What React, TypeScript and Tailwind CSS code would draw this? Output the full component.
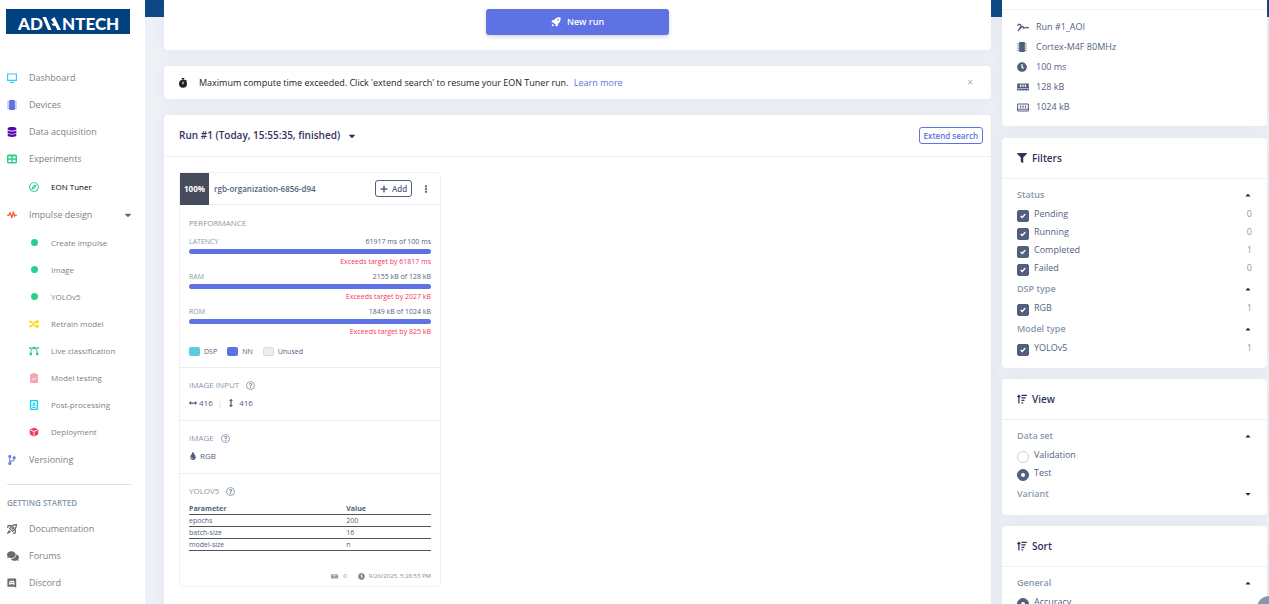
import type { ReactNode } from "react";
import {
  FaArrowsAltH,
  FaArrowsAltV,
  FaCaretDown,
  FaCaretUp,
  FaClock,
  FaCodeBranch,
  FaComments,
  FaDatabase,
  FaEllipsisV,
  FaFilter,
  FaMemory,
  FaPlus,
  FaRandom,
  FaRegCompass,
  FaRegQuestionCircle,
  FaSortAmountUp,
  FaTint,
} from "react-icons/fa";

function MonitorIcon() {
  return (
    <svg viewBox="0 0 10 10" className="size-[10px]" fill="none" stroke="currentColor" strokeWidth="1.2">
      <path d="M.6 1h8.8v6.400H.6zM2.800 9.300h4.400" />
    </svg>
  );
}

function ChipIcon() {
  return (
    <svg viewBox="0 0 10 10" className="size-[10px]" fill="currentColor">
      <rect x="2.200" y="0" width="5.600" height="10" rx=".6" />
      <path d="M.2 1.200h9.600v1.200H.2zM.2 3.400h9.600v1.200H.2zM.2 5.600h9.600v1.200H.2zM.2 7.800h9.600V9H.2z" opacity=".65" />
    </svg>
  );
}

function GridIcon() {
  return (
    <svg viewBox="0 0 10 10" className="size-[10px]" fill="none" stroke="currentColor" strokeWidth="1.4">
      <rect x=".7" y="1.200" width="8.600" height="7.600" rx=".8" />
      <path d="M.7 5h8.600M5 1v8M.7 1.700h8.600" />
    </svg>
  );
}

function PulseIcon() {
  return (
    <svg
      viewBox="0 0 10 10"
      className="size-[10px]"
      fill="none"
      stroke="currentColor"
      strokeWidth="1.4"
      strokeLinejoin="round"
      strokeLinecap="round"
    >
      <path d="M.7 5.300h1.200L3.200 2.600l1.600 5 1.500-5.600 1.300 4.200.7-1h1" />
    </svg>
  );
}

function CurveIcon() {
  return (
    <svg viewBox="0 0 10 10" className="size-[10px]" fill="none" stroke="currentColor">
      <path d="M1 2h8M3.800 2.200C2.400 3 1.800 4.600 1.800 7M6.200 2.200C7.600 3 8.200 4.600 8.200 7" />
      <path d="M3.800.8h2.400v2.400H3.800zM.6 6.800h2.400v2.400H.6zM7 6.800h2.400v2.400H7z" fill="currentColor" stroke="none" />
      <circle cx=".9" cy="2" r=".9" fill="currentColor" stroke="none" />
      <circle cx="9.100" cy="2" r=".9" fill="currentColor" stroke="none" />
    </svg>
  );
}

function ClipboardIcon() {
  return (
    <svg viewBox="0 0 10 10" className="size-[10px]">
      <path d="M1.800 1h1.700a1.500 1.500 0 0 1 3 0h1.700a.7.7 0 0 1 .7.7v7.600a.7.7 0 0 1-.7.7H1.800a.7.7 0 0 1-.7-.7V1.700a.7.7 0 0 1 .7-.7z" fill="currentColor" />
      <path d="M3.200 5.600l1.300 1.300 2.400-2.500" fill="none" stroke="#fff" />
    </svg>
  );
}

function BadgeIcon() {
  return (
    <svg viewBox="0 0 10 10" className="size-[10px]" fill="none" stroke="currentColor">
      <rect x="1.600" y=".6" width="6.800" height="8.800" rx=".6" strokeWidth="1.300" />
      <circle cx="5" cy="3.500" r="1.100" fill="currentColor" stroke="none" />
      <path d="M3.200 5.200h3.600M3.200 7.400h3.600" />
    </svg>
  );
}

function BoxIcon() {
  return (
    <svg viewBox="0 0 10 10" className="size-[10px]">
      <path d="M5 .8l3.600 1.400.6 1v3.700L8.400 8 5 9.500 1.600 8 .8 6.900V3.200l.6-1z" fill="currentColor" />
      <path d="M1.600 3.200L5 4.400l3.400-1.200M5 4.400v4.800" fill="none" stroke="#fff" strokeWidth=".9" />
    </svg>
  );
}

function SpaceshipIcon() {
  return (
    <svg viewBox="0 0 10 10" className="size-[10px]" fill="none" stroke="currentColor" strokeWidth="1.200">
      <path d="M9.400.6C6.500.6 4.200 1.700 2.700 4.500l2.800 2.800C8.300 5.800 9.400 3.500 9.400.6z" />
      <path d="M4.400 1.600H1.200L.6 4.200M8.400 5.600v3.200l-2.600.6M2.400 6.400.8 9.200l2.800-1.600" />
      <circle cx="6" cy="4" r=".9" />
    </svg>
  );
}

function DiscordIcon() {
  return (
    <svg viewBox="0 0 10 10" className="size-[10px]">
      <path d="M1 .6h7.600a.6.6 0 0 1 .6.6v8.700L7.600 8.800H1a.6.6 0 0 1-.6-.6v-7A.6.6 0 0 1 1 .6z" fill="currentColor" />
      <path d="M2.600 2.800h4.400l.8 3.800-1.400.2-.6-.6H3.800l-.6.6-1.400-.2z" fill="#fff" />
      <path d="M3.200 4h1v1.100h-1zM5.400 4h1v1.100h-1z" fill="currentColor" />
    </svg>
  );
}

function RocketIcon() {
  return (
    <svg viewBox="0 0 10 10" className="size-[10px]" fill="currentColor">
      <path
        fillRule="evenodd"
        d="M9.600.4C6.800.1 4.900 1 3.600 2.700L1.600 3 .3 5.200l2 .2 2.300 2.300.2 2L7 8.400l.3-2C9 5.100 9.900 3.200 9.600.4zM7 2.200a.8.8 0 1 1 0 1.600.8.8 0 0 1 0-1.600z"
      />
      <path d="M1.400 6.800l1.800 1.800-2.600.8z" />
    </svg>
  );
}

function StopwatchIcon() {
  return (
    <svg viewBox="0 0 10 10" className="size-[10px]" fill="currentColor">
      <path d="M3.600 0h2.800v1.100H5.600v.8h-1.200v-.8h-.8zM7.900 1.500l.9.900-.9.9-.9-.9z" />
      <circle cx="5" cy="5.800" r="4" />
      <path d="M5 3.600v2.600" stroke="#fff" />
    </svg>
  );
}

function ScribbleIcon() {
  return (
    <svg viewBox="0 0 12 9" className="h-[9px] w-3" fill="none" stroke="currentColor" strokeWidth="1.300" strokeLinecap="round" strokeLinejoin="round">
      <path d="M.8 2.200C2 1 4 .8 4 2.600 4 4.200 2.400 6 1.400 7.600 2.800 6 4.600 3.600 5.800 3.400c.9 0 .2 1.900 1 2 .8 0 1-1.200 1.800-1 .6.200.3.5 2.800.3" />
    </svg>
  );
}

function MemoryOutlineIcon() {
  return (
    <svg viewBox="0 0 12 9" className="h-[9px] w-3" fill="none" stroke="currentColor">
      <path d="M.6 1h10.800v7H.6zM.6 6.200h10.800" />
      <path d="M3.500 2.400v2.400M6 2.400v2.400M8.500 2.400v2.400" strokeWidth="1.200" />
    </svg>
  );
}

const dot = <span className="ml-[2px] block size-[7px] rounded-full bg-[#2dce89]" />;

type NavItem = { label: string; icon: ReactNode; color?: string; active?: boolean; caret?: boolean; children?: NavItem[] };

const navItems: NavItem[] = [
  { label: "Dashboard", icon: <MonitorIcon />, color: "text-[#35cdf0]" },
  { label: "Devices", icon: <ChipIcon />, color: "text-[#5e72e4]" },
  { label: "Data acquisition", icon: <FaDatabase />, color: "text-[#5603ad]" },
  {
    label: "Experiments",
    icon: <GridIcon />,
    color: "text-[#2dce89]",
    children: [{ label: "EON Tuner", icon: <FaRegCompass />, color: "text-[#2dce89]", active: true }],
  },
  {
    label: "Impulse design",
    icon: <PulseIcon />,
    color: "text-[#fb6340]",
    caret: true,
    children: [
      { label: "Create impulse", icon: dot },
      { label: "Image", icon: dot },
      { label: "YOLOv5", icon: dot },
      { label: "Retrain model", icon: <FaRandom />, color: "text-[#ffd600]" },
      { label: "Live classification", icon: <CurveIcon />, color: "text-[#2dce89]" },
      { label: "Model testing", icon: <ClipboardIcon />, color: "text-[#f3a4b5]" },
      { label: "Post-processing", icon: <BadgeIcon />, color: "text-[#11cdef]" },
      { label: "Deployment", icon: <BoxIcon />, color: "text-[#f5365c]" },
    ],
  },
  { label: "Versioning", icon: <FaCodeBranch />, color: "text-[#5e72e4]" },
];

const helpItems: NavItem[] = [
  { label: "Documentation", icon: <SpaceshipIcon />, color: "text-[#6b6b6b]" },
  { label: "Forums", icon: <FaComments className="text-xs" />, color: "text-[#6b6b6b]" },
  { label: "Discord", icon: <DiscordIcon />, color: "text-[#6b6b6b]" },
];

function NavRow({ item, sub }: { item: NavItem; sub?: boolean }) {
  return (
    <li>
      <a
        href="#"
        className={`flex h-[27px] items-center ${sub ? "pl-[29px] text-[8px]" : "pl-[7px] text-[9px]"} ${item.active ? "text-black" : "text-[#7f7f7f]"}`}
      >
        <span className={`w-[22px] shrink-0 text-[10px] ${item.color ?? ""}`}>{item.icon}</span>
        {item.label}
        {item.caret && <FaCaretDown className="mr-3 ml-auto text-[10px] text-[#666]" />}
      </a>
      {item.children && (
        <ul className="py-px">
          {item.children.map((child) => (
            <NavRow key={child.label} item={child} sub />
          ))}
        </ul>
      )}
    </li>
  );
}

function Sidebar() {
  return (
    <aside className="w-[145px] shrink-0 bg-white">
      <svg viewBox="0 0 124 25" className="mt-[9px] ml-[6px] h-[25px] w-[124px] bg-[#004280]" role="img" aria-label="Advantech">
        <g fill="#fff" fontFamily="Lato, sans-serif" fontWeight="900" fontSize="17">
          <text x="12" y="21">AD</text>
          <text x="56" y="21">NTECH</text>
        </g>
        <path d="M36.500 8h3.500l5.500 13h-3.500zM45 10.500l3.500-2.500 6.500 13h-3.700l-2-4.200h-2.600l-1.200-2.300h2.700z" fill="#fff" />
      </svg>
      <ul className="mt-[30px]">
        {navItems.map((item) => (
          <NavRow key={item.label} item={item} />
        ))}
      </ul>
      <hr className="mt-[11px] ml-[7px] w-[124px] border-[#dfe1e5]" />
      <h6 className="mt-3 ml-[7px] text-[8px] leading-3 font-semibold text-[#8898aa]">GETTING STARTED</h6>
      <ul className="mt-[6px]">
        {helpItems.map((item) => (
          <NavRow key={item.label} item={item} />
        ))}
      </ul>
    </aside>
  );
}

const metrics = [
  { name: "LATENCY", value: "61917 ms of 100 ms", over: "Exceeds target by 61817 ms" },
  { name: "RAM", value: "2155 kB of 128 kB", over: "Exceeds target by 2027 kB" },
  { name: "ROM", value: "1849 kB of 1024 kB", over: "Exceeds target by 825 kB" },
];

const params = [
  ["epochs", "200"],
  ["batch-size", "16"],
  ["model-size", "n"],
];

function SectionTitle({ children }: { children: ReactNode }) {
  return (
    <h5 className="flex items-center gap-[7px] text-[8px] leading-3 text-[#8898aa]">
      {children}
      <FaRegQuestionCircle className="text-[9px]" />
    </h5>
  );
}

function ResultCard() {
  return (
    <article className="w-[262px] rounded border border-[#f0f1f4] text-[#525f7f]">
      <header className="flex h-8 items-center border-b border-[#eceef2]">
        <div className="flex h-8 w-[29px] items-center justify-center bg-[#474c5c] text-[8px] font-bold text-white">100%</div>
        <h4 className="ml-[5px] text-[8px] font-semibold">rgb-organization-6856-d94</h4>
        <button className="ml-auto flex h-[17px] w-[37px] items-center justify-center gap-1 rounded-[3px] border border-[#525f7f] text-[8px] font-semibold">
          <FaPlus />
          Add
        </button>
        <button aria-label="More options" className="mx-[10px] text-[8px]">
          <FaEllipsisV />
        </button>
      </header>

      {/* Performance */}
      <section className="border-b border-[#eceef2] px-[9px] pt-3 pb-[10px]">
        <h5 className="text-[8px] leading-3 text-[#8898aa]">PERFORMANCE</h5>
        <div className="mt-2 space-y-[5px]">
          {metrics.map((m) => (
            <div key={m.name} className="text-[7px] leading-[10px]">
              <div className="flex justify-between">
                <span className="text-[#8898aa]">{m.name}</span>
                <span>{m.value}</span>
              </div>
              <div className="mt-[2px] mb-[3px] h-[5px] rounded-full bg-[#5e72e4]" />
              <p className="text-right text-[#f5365c]">{m.over}</p>
            </div>
          ))}
        </div>
        <ul className="mt-[10px] flex gap-[10px] text-[7px] leading-[10px]">
          <li className="flex gap-1">
            <span className="h-[9px] w-[11px] rounded-[2px] bg-[#5bcbdf]" />
            DSP
          </li>
          <li className="flex gap-1">
            <span className="h-[9px] w-[11px] rounded-[2px] bg-[#5e72e4]" />
            NN
          </li>
          <li className="flex gap-1">
            <span className="h-[9px] w-[11px] rounded-[2px] border border-[#dcdcdc] bg-[#ededed]" />
            Unused
          </li>
        </ul>
      </section>

      <section className="border-b border-[#eceef2] px-[9px] py-[11px]">
        <SectionTitle>IMAGE INPUT</SectionTitle>
        <p className="mt-[6px] flex items-center text-[8px] leading-3">
          <FaArrowsAltH className="mr-[2px]" />
          416
          <span className="mx-[5px] text-[#cdd1da]">|</span>
          <FaArrowsAltV className="mr-1" />
          416
        </p>
      </section>

      <section className="border-b border-[#eceef2] px-[9px] py-[11px]">
        <SectionTitle>IMAGE</SectionTitle>
        <p className="mt-[6px] flex items-center gap-[3px] text-[8px] leading-3">
          <FaTint />
          RGB
        </p>
      </section>

      <section className="px-[9px] pt-[11px] pb-1">
        <SectionTitle>YOLOV5</SectionTitle>
        <table className="mt-[6px] w-full text-left text-[7px] leading-[11px]">
          <thead>
            <tr className="border-b border-[#555]">
              <th className="w-[65%] font-bold">Parameter</th>
              <th className="font-bold">Value</th>
            </tr>
          </thead>
          <tbody>
            {params.map(([name, value]) => (
              <tr key={name} className="border-b border-[#555]">
                <td>{name}</td>
                <td>{value}</td>
              </tr>
            ))}
          </tbody>
        </table>
        <footer className="mt-[19px] flex items-center justify-end text-[6px] leading-3 text-[#8a8a8a]">
          <FaMemory className="mr-[5px] text-[7px]" />
          0
          <FaClock className="mr-1 ml-[11px] text-[7px]" />
          9/26/2025, 5:28:53 PM
        </footer>
      </section>
    </article>
  );
}

function Panel({ title, icon, children }: { title: string; icon: ReactNode; children: ReactNode }) {
  return (
    <section className="mb-[11px] rounded bg-white shadow-[0_0_16px_rgba(136,152,170,0.12)]">
      <h3 className="flex h-[41px] items-center gap-[5px] border-b border-[#eef0f3] px-[15px] text-[10px] font-semibold text-[#32325d]">
        {icon}
        {title}
      </h3>
      <div className="grid gap-px px-[15px] pt-[5px] pb-[11px]">{children}</div>
    </section>
  );
}

type Option = { label: string; count?: number; checked?: boolean };

function OptionGroup({ title, type = "checkbox", options = [] }: { title: string; type?: "checkbox" | "radio"; options?: Option[] }) {
  return (
    <div>
      <h4 className="flex h-[21px] items-center justify-between text-[9px] font-semibold text-[#8898aa]">
        {title}
        <button aria-label={`Toggle ${title}`} className="text-[8px] text-[#172b4d]">
          {options.length ? <FaCaretUp /> : <FaCaretDown />}
        </button>
      </h4>
      {options.map((o) => (
        <label key={o.label} className="flex h-[18px] items-center text-[9px] text-[#525f7f]">
          <span className="relative mt-[3px] mr-[5px] grid size-3 place-items-center">
            <input
              type={type}
              name={title}
              defaultChecked={o.checked}
              className={`absolute inset-0 appearance-none border border-[#cad1d7] bg-white checked:border-[#525f7f] checked:bg-[#525f7f] ${type === "radio" ? "rounded-full" : "rounded-[2px]"}`}
            />
            {type === "radio" ? (
              <span className="relative size-1 rounded-full bg-white" />
            ) : (
              <svg viewBox="0 0 8 8" className="relative size-[6px]" fill="none" stroke="#fff" strokeWidth="2">
                <path d="M1 4l2 2 4-4.500" />
              </svg>
            )}
          </span>
          {o.label}
          {o.count !== undefined && <span className="ml-auto text-[#8898aa]">{o.count}</span>}
        </label>
      ))}
    </div>
  );
}

const target = [
  { label: "Run #1_AOI", icon: <ScribbleIcon /> },
  { label: "Cortex-M4F 80MHz", icon: <ChipIcon /> },
  { label: "100 ms", icon: <FaClock /> },
  { label: "128 kB", icon: <FaMemory className="text-xs" /> },
  { label: "1024 kB", icon: <MemoryOutlineIcon /> },
];

export default function App() {
  return (
    <div className="flex h-screen overflow-hidden bg-white font-['Open_Sans',sans-serif]">
      <Sidebar />

      <main className="flex flex-1 items-start gap-[11px] self-stretch bg-[linear-gradient(to_bottom,#0b4784_17px,#eff1f7_17px)] pr-[2px] pl-[19px]">
        {/* Runs */}
        <div className="flex-1">
          <section className="flex justify-center rounded-b bg-white pt-[9px] pb-[15px] shadow-[0_0_16px_rgba(136,152,170,0.12)]">
            <button className="flex h-[26px] w-[183px] items-center justify-center gap-[6px] rounded-[3px] bg-[#5e72e4] text-[9px] font-semibold text-white shadow-[0_2px_4px_rgba(50,50,93,0.2)]">
              <RocketIcon />
              New run
            </button>
          </section>

          <section className="mt-4 flex h-[33px] items-center rounded bg-white px-[14px] text-[9px] text-[#212529] shadow-[0_0_16px_rgba(136,152,170,0.12)]">
            <span className="mr-[11px]">
              <StopwatchIcon />
            </span>
            <p>
              Maximum compute time exceeded. Click 'extend search' to resume your EON Tuner run.{" "}
              <a href="#" className="ml-[3px] text-[#5e72e4]">Learn more</a>
            </p>
            <button aria-label="Dismiss" className="mr-1 ml-auto text-[10px] text-[#a5b0bd]">×</button>
          </section>

          <section className="mt-4 rounded bg-white pb-10 shadow-[0_0_16px_rgba(136,152,170,0.12)]">
            <header className="flex h-[42px] items-center border-b border-[#eef0f3] pr-2 pl-[15px]">
              <button className="flex items-center gap-[7px] text-[10px] font-semibold text-[#32325d]">
                Run #1 (Today, 15:55:35, finished)
                <FaCaretDown />
              </button>
              <button className="ml-auto flex h-[17px] items-center rounded-[3px] border border-[#5e72e4] px-1 text-[8px] font-semibold text-[#5e72e4]">
                Extend search
              </button>
            </header>
            <div className="px-[15px] pt-[15px]">
              <ResultCard />
            </div>
          </section>
        </div>

        {/* Target and filters */}
        <div className="w-[265px] shrink-0">
          <section className="mb-3 rounded-b bg-white pt-[9px] shadow-[0_0_16px_rgba(136,152,170,0.12)]">
            <ul className="border-t border-[#eef0f3] px-[15px] pt-[7px] pb-[9px] text-[9px] text-[#525f7f]">
              {target.map((t) => (
                <li key={t.label} className="flex h-5 items-center">
                  <span className="w-[19px] text-[10px]">{t.icon}</span>
                  {t.label}
                </li>
              ))}
            </ul>
          </section>

          <Panel title="Filters" icon={<FaFilter />}>
            <OptionGroup
              title="Status"
              options={[
                { label: "Pending", count: 0, checked: true },
                { label: "Running", count: 0, checked: true },
                { label: "Completed", count: 1, checked: true },
                { label: "Failed", count: 0, checked: true },
              ]}
            />
            <OptionGroup title="DSP type" options={[{ label: "RGB", count: 1, checked: true }]} />
            <OptionGroup title="Model type" options={[{ label: "YOLOv5", count: 1, checked: true }]} />
          </Panel>

          <Panel title="View" icon={<FaSortAmountUp />}>
            <OptionGroup title="Data set" type="radio" options={[{ label: "Validation" }, { label: "Test", checked: true }]} />
            <OptionGroup title="Variant" />
          </Panel>

          <Panel title="Sort" icon={<FaSortAmountUp />}>
            <OptionGroup title="General" type="radio" options={[{ label: "Accuracy", checked: true }]} />
          </Panel>
        </div>
      </main>

      <button aria-label="Help" className="fixed -right-3 -bottom-4 size-6 rounded-full bg-[#8898aa]" />
    </div>
  );
}
